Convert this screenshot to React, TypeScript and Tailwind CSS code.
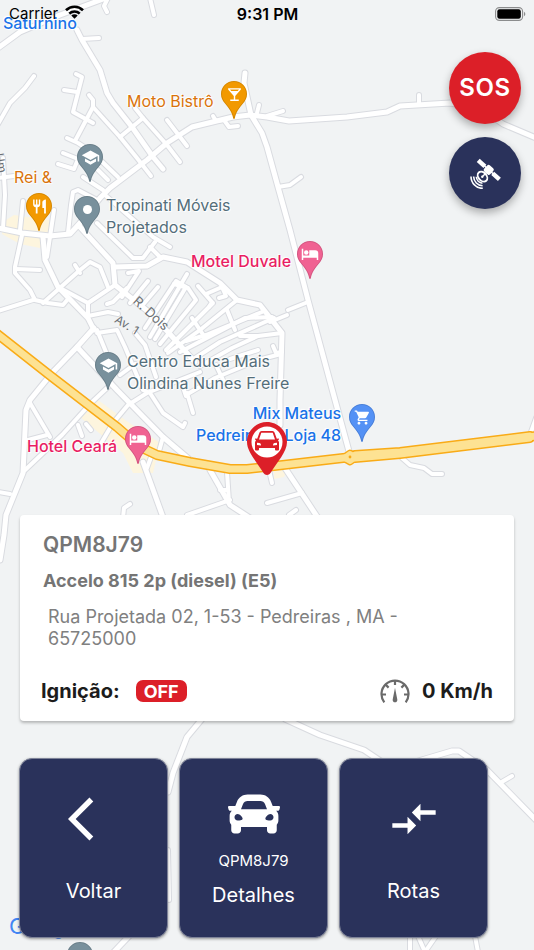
import type { ReactNode } from "react";
import { FaCar } from "react-icons/fa";
import {
  MdArrowBackIos,
  MdCompareArrows,
  MdLocalBar,
  MdRestaurant,
  MdSchool,
  MdShoppingCart,
} from "react-icons/md";

const mainRoads = [
  "M-2 48L20 32L60 15L106 -2",
  "M77 30L82 40L100 70L107 93L113 103L132 127L153 157L163 169",
  "M-2 228L22 233L50 236L70 234L80 223L100 198L110 188L147 160L167 143L192 127L233 117L250 115L267 117L289 121L347 117L387 112L400 106L450 103L480 108L503 124L536 138",
  "M245 73L244 83L251 115L262 133L267 147L278 187L290 230L308 300L335 400L350 455",
  "M43 237L45 260L58 287L88 318L94 330",
  "M80 227L113 263L115 285L150 313L168 332L195 362",
  "M115 267L147 266L163 257L187 262L220 283L237 300L260 305L282 333L280 400L280 425",
  "M94 328L77 347L52 373L30 400L26 410L23 473L6 515L4 535L0 560",
  "M77 347L117 390L163 437L190 460",
  "M143 462L164 520",
  "M210 470L230 505L250 518",
  "M285 468L318 518",
  "M285 719L320 735L364 750L382 762",
  "M415 762L452 751L459 751L487 770L536 820",
  "M202 719L187 737L173 773L168 792",
  "M130 935L112 954",
];

const streets = [
  "M108 -2L104 6L107 12",
  "M150 -2L154 15",
  "M82 39L99 38",
  "M-2 124L10 103L25 88L34 76",
  "M76 74L82 77L73 112L93 123",
  "M64 90L77 92",
  "M89 95L93 100L93 107L75 141",
  "M93 107L120 137L137 158L151 176",
  "M120 137L143 118",
  "M135 108L143 118L167 145L180 162",
  "M167 120L187 146",
  "M213 116L216 121L224 120L229 127L238 126",
  "M259 105L257 113",
  "M267 116L283 111",
  "M419 103L419 95",
  "M278 187L290 185L301 177",
  "M67 138L78 143L92 152L118 177",
  "M63 153L78 159L74 169L58 164",
  "M83 177L103 190",
  "M98 170L108 180",
  "M68 233L71 205L73 192L78 190L97 200",
  "M3 158L5 195L3 228",
  "M-2 178L14 176",
  "M23 201L20 230",
  "M22 235L15 267L15 273L30 290L35 300L48 303L63 305L68 299",
  "M16 269L40 270",
  "M54 210L47 257",
  "M-2 311L33 300",
  "M58 287L88 303L88 318",
  "M88 303L115 285",
  "M43 303L80 270L90 262L100 267L108 287",
  "M75 265L80 273",
  "M97 223L133 258L143 258L155 242",
  "M105 195L153 237L170 247",
  "M150 247L160 257",
  "M88 316L108 312L118 314",
  "M97 333L117 330L125 347L143 390L150 393L163 413L183 427L185 423",
  "M97 330L106 352",
  "M108 387L90 404L62 435L23 472",
  "M30 403L50 437",
  "M28 440L47 435",
  "M78 425L82 436",
  "M86 424L91 430",
  "M100 445L113 423L128 405L147 393L200 372",
  "M120 375L135 364",
  "M135 333L145 345L156 377",
  "M187 393L193 413",
  "M163 437L158 455",
  "M151 457L147 468",
  "M227 472L229 502",
  "M187 515L230 500",
  "M220 490L228 490",
  "M130 504L124 508L123 518",
  "M267 503L302 493",
  "M289 515L296 510",
  "M269 470L272 483",
  "M402 458L410 465L424 468L432 474L442 474",
  "M536 418L531 432",
  "M308 302L288 310",
  "M287 315L270 322",
  "M-2 492L10 494",
  "M500 783L512 776",
  "M410 936L410 952",
  "M418 936L425 952L436 936",
  "M475 936L478 952",
  "M168 850L169 900",
  // street grid around R. Dois
  "M128 273L139 271L122 297",
  "M107 304L113 302L127 288",
  "M148 281L130 303",
  "M158 287L141 307",
  "M150 337L187 274",
  "M145 328L176 281L186 287L155 339",
  "M160 344L196 300L188 288L174 284",
  "M166 350L213 303",
  "M198 286L212 302L209 307",
  "M206 294L222 287L226 296L219 298",
  "M168 353L200 330L237 300",
  "M186 341L206 335L262 312",
  "M192 318L204 336",
  "M227 310L235 330",
  "M180 352L245 318L272 317",
  "M192 360L220 342L274 318",
  "M200 366L232 348L258 336L282 333",
  "M258 336L240 336",
  "M273 346L276 353L282 352",
  "M186 395L215 378L258 360L281 354",
  "M216 365L224 382",
  "M230 359L258 350",
  "M186 396L182 384",
];

const highway =
  "M-4 333L52 377L117 427L140 447L157 455L190 462L230 469L247 469L274 466L343 458L400 453L536 436";
// the carriageway widens east of the roundabout
const highwayWide = "M355 454L400 451L530 435V439L400 455L355 459Z";
const roundabout = "M343 458L350 453L357 457L350 462Z";

function MapDrawing() {
  return (
    <svg className="absolute left-0 top-0 h-[950px] w-[534px]" viewBox="0 0 534 950" fill="none" aria-hidden="true">
      <g fill="#fdf5de">
        <path d="M80 417L98 400L128 422L160 443L153 473L133 473L123 453Z" />
        <path d="M3 222L14 215L50 220L50 236L40 248L20 244L2 234Z" />
        <path d="M274 470L288 468L284 477L274 479Z" />
      </g>
      <g strokeLinecap="round" strokeLinejoin="round">
        <g stroke="#d9dbe0">
          {streets.map((d) => <path key={d} d={d} strokeWidth="6" />)}
          {mainRoads.map((d) => <path key={d} d={d} strokeWidth="7" />)}
        </g>
        <g stroke="#ffffff">
          {streets.map((d) => <path key={d} d={d} strokeWidth="4" />)}
          {mainRoads.map((d) => <path key={d} d={d} strokeWidth="5" />)}
        </g>
        <g stroke="#f9ab17">
          <path d={highway} strokeWidth="10" />
          <path d={highwayWide} fill="#f9ab17" strokeWidth="8" />
          <path d={roundabout} fill="#f9ab17" strokeWidth="7" />
        </g>
        <g stroke="#fde293">
          <path d={highway} strokeWidth="7" />
          <path d={highwayWide} fill="#fde293" strokeWidth="5" />
          <path d={roundabout} fill="#fde293" strokeWidth="4" />
        </g>
        <circle cx="350" cy="457" r="1.4" fill="#f9ab17" />
      </g>
    </svg>
  );
}

function BedIcon() {
  return (
    <svg viewBox="0 0 24 24" className="h-[18px] w-[18px]" fill="currentColor" aria-hidden="true">
      <circle cx="7" cy="10" r="3" />
      <path d="M11 7h8a4 4 0 0 1 4 4v9h-2v-3H3v3H1V5h2v9h8z" />
    </svg>
  );
}

function Pin({ className, children }: { className: string; children?: ReactNode }) {
  return (
    <div className={`absolute h-[38px] w-[26px] ${className}`}>
      <svg viewBox="0 0 26 38" className="absolute inset-0" fill="currentColor" aria-hidden="true">
        <path d="M13 0C5.8 0 0 5.8 0 13c0 3.800 1.500 6.400 3.800 9.300C7.800 27.300 11 31 12.200 37.200c.2 1 1.400 1 1.600 0C15 31 18.200 27.300 22.200 22.300 24.500 19.400 26 16.800 26 13 26 5.800 20.200 0 13 0z" />
        <path
          d="M13 .5C6 .5.500 6 .5 13c0 3.700 1.500 6.200 3.700 9 4 5 7.500 9 8.800 15.500C14.300 31 17.800 27 21.800 22c2.200-2.800 3.700-5.300 3.700-9C25.500 6 20 .5 13 .5z"
          fill="none"
          stroke="#000"
          strokeOpacity=".12"
        />
      </svg>
      <div className="relative flex h-[26px] items-center justify-center text-white">{children}</div>
    </div>
  );
}

const label =
  "absolute whitespace-nowrap text-[16px] leading-[22px] [text-shadow:0_0_2px_#fff,0_0_2px_#fff,1px_1px_1px_#fff,-1px_-1px_1px_#fff]";

function MapLabels() {
  return (
    <>
      <span className={`${label} left-[3px] top-[12px] font-medium text-[#1a73e8]`}>Saturnino</span>
      <span className={`${label} left-[127px] top-[90px] text-[#d9730b]`}>Moto Bistrô</span>
      <Pin className="left-[221px] top-[81px] text-[#f29900]"><MdLocalBar size={17} /></Pin>
      <Pin className="left-[77px] top-[144px] text-[#78909c]"><MdSchool size={19} /></Pin>
      <span className={`${label} left-[14px] top-[166px] text-[#d9730b]`}>Rei &amp;</span>
      <Pin className="left-[26px] top-[193px] text-[#f29900]"><MdRestaurant size={17} /></Pin>
      <Pin className="left-[74px] top-[196px] text-[#78909c]"><span className="h-[9px] w-[9px] rounded-full bg-white" /></Pin>
      <span className={`${label} left-[106px] top-[194px] text-[#546e7a]`}>Tropinati Móveis<br />Projetados</span>
      <span className={`${label} left-[191px] top-[250px] font-medium text-[#e91e63]`}>Motel Duvale</span>
      <Pin className="left-[297px] top-[241px] text-[#f06292]"><BedIcon /></Pin>
      <Pin className="left-[95px] top-[352px] text-[#78909c]"><MdSchool size={19} /></Pin>
      <span className={`${label} left-[127px] top-[350px] text-[#546e7a]`}>Centro Educa Mais<br />Olindina Nunes Freire</span>
      <span className={`${label} left-[27px] top-[435px] font-medium text-[#e91e63]`}>Hotel Ceará</span>
      <Pin className="left-[125px] top-[426px] text-[#f06292]"><BedIcon /></Pin>
      <span className={`${label} left-[196px] top-[402px] text-right font-medium text-[#1a73e8]`}>Mix Mateus<br />Pedreiras - Loja 48</span>
      <Pin className="left-[349px] top-[404px] text-[#5491f5]"><MdShoppingCart size={17} /></Pin>
      <Pin className="left-[67px] top-[942px] text-[#78909c]" />

      <span className="absolute left-[130px] top-[305px] rotate-[42deg] text-[13px] leading-4 text-[#6b6f73]">R. Dois</span>
      <span className="absolute left-[114px] top-[317px] rotate-[32deg] text-[12px] leading-4 text-[#6b6f73]">Av. 1</span>
      <span className="absolute left-[-9px] top-[155px] rotate-[80deg] text-[12px] leading-4 text-[#6b6f73]">Um</span>

      <span className="absolute left-[9px] top-[912px] whitespace-nowrap text-[22px] leading-7 text-[#4285f4]">
        G<span className="text-[#ea4335]">o</span><span className="text-[#fbbc05]">o</span>g
        <span className="text-[#34a853]">l</span><span className="text-[#ea4335]">e</span>
      </span>

      {/* Vehicle marker */}
      <div className="absolute left-[247px] top-[422px] h-[53px] w-[40px]">
        <svg viewBox="0 0 40 53" className="absolute inset-0" aria-hidden="true">
          <path d="M20 0C9 0 0 9 0 20c0 10 10 20 16.500 31 1.500 2.500 5.500 2.500 7 0C30 40 40 30 40 20 40 9 31 0 20 0z" fill="#dc1f28" />
          <circle cx="20" cy="20" r="15.500" fill="#fff" />
          <path
            fillRule="evenodd"
            fill="#dc1f28"
            d="M12.500 10.500Q13 9 14.500 9h11q1.500 0 2 1.500l2.300 6.300 1.700-.3q.7 0 .5.800l-1 1.200q1 .8 1 2V27.500q0 1-1 1h-2q-1 0-1-1V26H12v1.500q0 1-1 1H9q-1 0-1-1V20.500q0-1.200 1-2l-1-1.200q-.2-.8.500-.8l1.700.3zM14.300 10.800L12 17.600H28L25.700 10.800zM10 20.800v2.200l4 .4q.2-2-1.500-2.300zM30 20.800v2.200l-4 .4q-.2-2 1.500-2.300z"
          />
        </svg>
      </div>
    </>
  );
}

function SatelliteIcon() {
  return (
    <svg viewBox="0 0 32 32" className="h-8 w-8" fill="none" stroke="currentColor" aria-hidden="true">
      <g transform="rotate(42 20 13)" fill="currentColor" stroke="none">
        <rect x="5.500" y="10.800" width="9" height="4.400" />
        <rect x="25" y="10.800" width="9" height="4.400" />
        <rect x="14" y="12.200" width="12" height="1.600" />
        <rect x="15.600" y="9" width="8.200" height="8.200" rx="1.800" />
      </g>
      <ellipse cx="13.500" cy="19.600" rx="4" ry="5.600" strokeWidth="1.900" transform="rotate(-42 13.500 19.600)" />
      <path d="M17.500 15.500L13.500 19.500" strokeWidth="1.400" />
      <circle cx="13.300" cy="19.800" r="1.200" fill="currentColor" stroke="none" />
      <path d="M7.300 19.800A7 7 0 0 0 13.500 26.200M4.600 19.600A9.500 9.500 0 0 0 13.600 28.800M2 19.400A12 12 0 0 0 13.800 31.400" strokeWidth="1.600" />
    </svg>
  );
}

function SpeedIcon() {
  return (
    <svg viewBox="0 0 30 24" className="h-6 w-[30px]" fill="none" stroke="#6a6a6a" strokeWidth="2.200" aria-hidden="true">
      <path d="M4.300 23.300A13.500 13.500 0 1 1 25.700 23.300" />
      <path d="M15 1.500V6M5.600 5.600L8.600 8.600M24.400 5.600L21.400 8.600M1.500 15.500H6M28.500 15.500H24" />
      <path d="M15 8.800L12.700 20.500a2.350 2.350 0 1 0 4.600 0z" fill="#6a6a6a" stroke="none" />
    </svg>
  );
}

function StatusBar() {
  return (
    <header className="flex h-7 items-center justify-between pl-[9px] pr-2 text-black">
      <div className="flex flex-1 items-center gap-[7px]">
        <span className="text-[15px]">Carrier</span>
        <svg viewBox="0 0 19 14" className="-mt-1 h-[14px] w-[19px]" fill="none" stroke="#000" strokeWidth="2.700" aria-hidden="true">
          <path d="M1 5.200a12.200 12.200 0 0 1 17 0" />
          <path d="M4.300 8.600a7.500 7.500 0 0 1 10.400 0" />
          <path d="M9.500 13.800L6.300 10.500a4.500 4.500 0 0 1 6.400 0z" fill="#000" stroke="none" />
        </svg>
      </div>
      <span className="text-[16px] font-semibold">9:31 PM</span>
      <div className="flex flex-1 justify-end">
        <svg viewBox="0 0 31 14" className="-mt-px h-[14px] w-[31px]" aria-hidden="true">
          <rect x=".6" y=".6" width="27" height="12.800" rx="3.800" fill="none" stroke="#8b8c8d" strokeWidth="1.100" />
          <rect x="2.300" y="2.300" width="23.500" height="9.400" rx="2.200" />
          <path d="M29 4.800c1.800.7 1.800 3.700 0 4.400z" fill="#8b8c8d" />
        </svg>
      </div>
    </header>
  );
}

const action =
  "flex h-[180px] flex-1 flex-col items-center rounded-[13px] border border-[#7d8298] bg-[#2a325b] text-white shadow-[0_1px_3px_rgba(0,0,0,0.4)]";

export default function App() {
  return (
    <main className="relative flex min-h-screen flex-col overflow-hidden bg-[#f1f3f4] font-['Inter','Liberation_Sans',sans-serif]">
      <div className="absolute inset-0">
        <MapDrawing />
        <MapLabels />
      </div>

      <div className="relative flex flex-1 flex-col">
        <StatusBar />

        {/* Floating buttons */}
        <div className="mt-6 flex flex-col items-end gap-[13px] pr-[13px]">
          <button className="h-[72px] w-[72px] rounded-full bg-[#dc1f28] text-[24px] font-semibold tracking-wide text-white shadow-[0_4px_8px_rgba(0,0,0,0.3)]">
            SOS
          </button>
          <button
            aria-label="Satélite"
            className="flex h-[72px] w-[72px] items-center justify-center rounded-full bg-[#2a325b] text-white shadow-[0_4px_8px_rgba(0,0,0,0.3)]"
          >
            <SatelliteIcon />
          </button>
        </div>

        {/* Vehicle card */}
        <section className="mx-5 mt-auto flex h-[206px] flex-col rounded bg-white shadow-[0_2px_3px_rgba(0,0,0,0.25)]">
          <h1 className="pl-[23px] pt-[18px] text-[21px] leading-6 font-semibold text-[#757575]">QPM8J79</h1>
          <h2 className="mt-3 pl-[23px] text-[18px] leading-6 font-bold text-[#757575]">Accelo 815 2p (diesel) (E5)</h2>
          <p className="mt-[13px] pl-7 pr-20 text-[18px] leading-[22px] text-[#808080]">
            Rua Projetada 02, 1-53 - Pedreiras , MA - 65725000
          </p>
          <div className="mb-[18px] mt-auto flex h-6 items-center justify-between px-[21px] text-[20px] font-bold text-[#1c1c1c]">
            <div className="flex items-center gap-4">
              <span>Ignição:</span>
              <span className="flex h-[22px] w-[51px] items-center justify-center rounded-[7px] bg-[#dc1f28] text-[18px] text-white">
                OFF
              </span>
            </div>
            <div className="flex items-center gap-3">
              <SpeedIcon />
              <span>0 Km/h</span>
            </div>
          </div>
        </section>

        {/* Actions */}
        <nav className="mb-3 mt-[37px] flex gap-[11px] pl-[19px] pr-[46px]">
          <button className={`${action} pt-[34px]`}>
            <MdArrowBackIos size={52} />
            <span className="mt-[34px] text-[20px] leading-6">Voltar</span>
          </button>
          <button className={`${action} pt-[29px]`}>
            <FaCar size={52} />
            <span className="mt-[11px] text-[15px] leading-5">QPM8J79</span>
            <span className="mt-3 text-[20px] leading-6">Detalhes</span>
          </button>
          <button className={`${action} pt-[34px]`}>
            <MdCompareArrows size={52} />
            <span className="mt-[34px] text-[20px] leading-6">Rotas</span>
          </button>
        </nav>
      </div>
    </main>
  );
}
